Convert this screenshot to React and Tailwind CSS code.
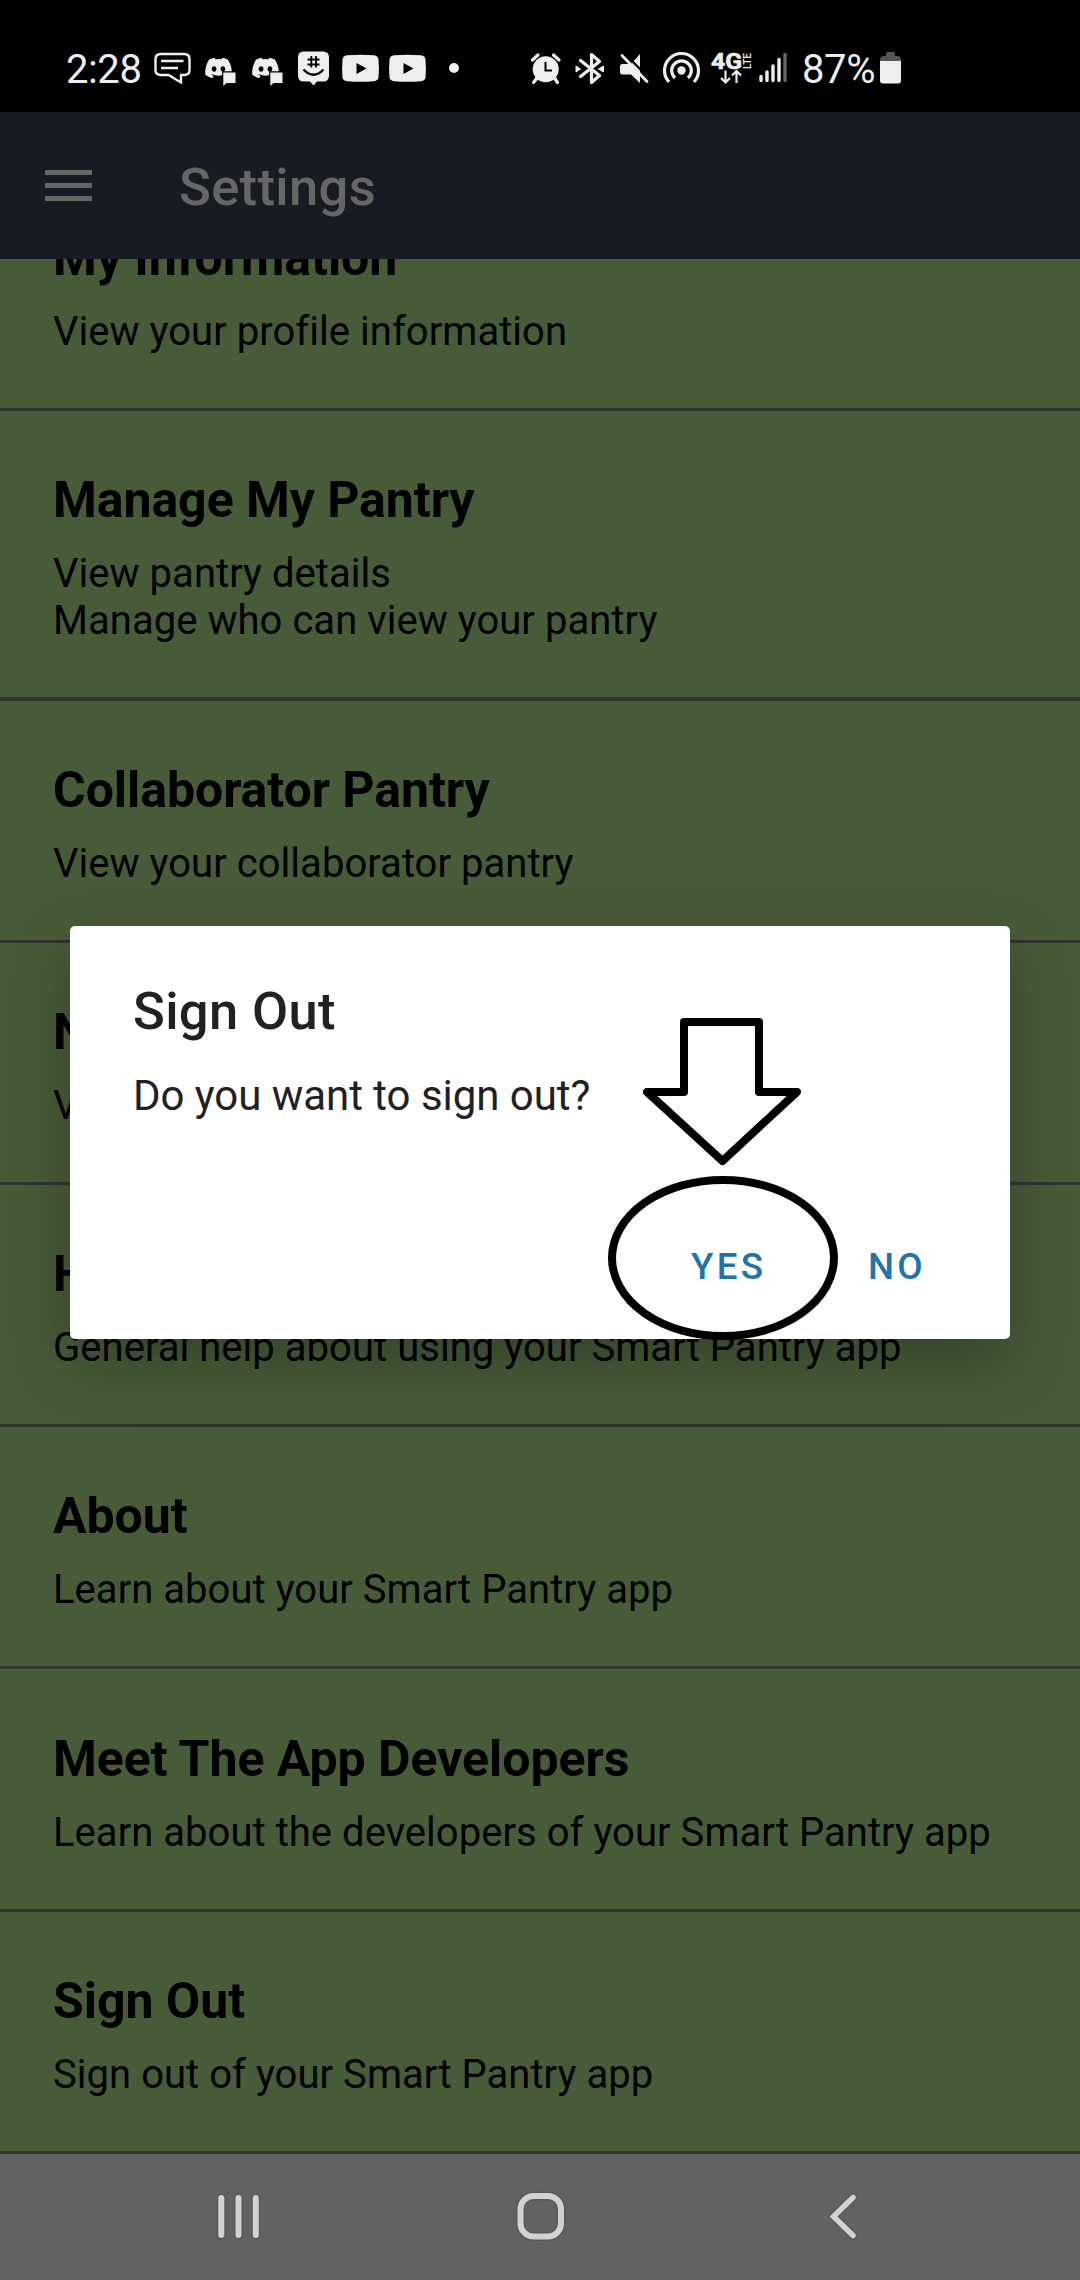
import React from "react";
import { FaDiscord } from "react-icons/fa";

const rows = [
  { title: "My Information", lines: ["View your profile information"], frame: "pt-[60px] border-b-[3px]" },
  { title: "Manage My Pantry", lines: ["View pantry details", "Manage who can view your pantry"], frame: "pt-[60px] border-b-[4px]" },
  { title: "Collaborator Pantry", lines: ["View your collaborator pantry"], frame: "pt-[60px] border-b-[3px]" },
  { title: "Notifications", lines: ["View your notifications"], frame: "pt-[60px] border-b-[3px]" },
  { title: "Help", lines: ["General help about using your Smart Pantry app"], frame: "pt-[60px] border-b-[3px]" },
  { title: "About", lines: ["Learn about your Smart Pantry app"], frame: "pt-[60px] border-b-[3px]" },
  { title: "Meet The App Developers", lines: ["Learn about the developers of your Smart Pantry app"], frame: "pt-[61px] border-b-[3px]" },
  { title: "Sign Out", lines: ["Sign out of your Smart Pantry app"], frame: "pt-[60px] border-b-[3px]" },
];

function Glyph({ box, className = "", children }) {
  const [, , w, h] = box.split(" ");
  return (
    <svg viewBox={box} width={w} height={h} className={"shrink-0 overflow-visible " + className} fill="none" stroke="none">
      {children}
    </svg>
  );
}

function Discord({ className }) {
  return (
    <div className={"relative h-[34px] w-[32px] shrink-0 " + className}>
      <FaDiscord className="mt-[2px] h-[30px] w-[29px]" />
      <svg viewBox="0 0 32 34" className="absolute top-0 left-0 h-[34px] w-[32px] overflow-visible">
        <path d="M19.300 21.500H31.500V32H22.500L19.300 35Z" fill="#eee" stroke="#000" strokeWidth="2.400" paintOrder="stroke" />
      </svg>
    </div>
  );
}

function YouTube({ className }) {
  return (
    <Glyph box="0 0 37 34" className={className}>
      <path d="M5 4.300Q18.500 3.100 32 4.300Q36 4.800 36.500 8.500Q37.300 17.500 36.500 26.500Q36 29.800 32 30.200Q18.500 31.400 5 30.200Q1 29.800.5 26.500Q-.3 17.500 .5 8.500Q1 4.800 5 4.300Z" fill="#eee" />
      <path d="M14.500 12L24.500 17.500L14.500 23Z" fill="#000" />
    </Glyph>
  );
}

function StatusBar() {
  return (
    <div className="flex h-[112px] items-start bg-black pt-[51px] text-[#eee]">
      <span className="-mt-[5px] ml-[66px] w-[76px] text-[40px] leading-[47px] tracking-[-0.4px] whitespace-nowrap">2:28</span>
      <Glyph box="154 51 37 34" className="ml-[12px]">
        <path d="M161 54H184Q189.500 54 189.500 59V70Q189.500 75 184 75H181V82.500L168.500 75H161Q155.500 75 155.500 70V59Q155.500 54 161 54Z" stroke="#eee" strokeWidth="2.400" />
        <path d="M161 61H183.500M161 68H178" stroke="#eee" strokeWidth="2.400" />
      </Glyph>
      <Discord className="ml-[13px]" />
      <Discord className="ml-[15px]" />
      <Glyph box="298 51 31 35" className="ml-[15px]">
        <path d="M304 51.500H323Q329 51.500 329 57.500V75.500Q329 81.500 323 81.500H317L313.500 85.500L310 81.500H304Q298 81.500 298 75.500V57.500Q298 51.500 304 51.500Z" fill="#eee" />
        <path d="M311.300 56V67.500M316 56V67.500M307.500 59.500H319.500M307.500 64.500H319.500" stroke="#000" strokeWidth="1.800" />
        <path d="M303.500 69.500Q313.500 80 323.500 69.500" stroke="#000" strokeWidth="2.400" />
      </Glyph>
      <YouTube className="ml-[13px]" />
      <YouTube className="ml-[10px]" />
      <span className="mt-[12px] ml-[23px] h-[10px] w-[10px] rounded-full bg-[#eee]" />
      <Glyph box="531 51 30 34" className="ml-[72px]">
        <circle cx="545.700" cy="69.300" r="13" fill="#eee" />
        <path d="M532.500 60L538 55M559 60L553.500 55M537 78L533.500 82.500M554.500 78L557.500 82.500" stroke="#eee" strokeWidth="3.200" strokeLinecap="round" />
        <path d="M545.500 62V70.500H552" stroke="#000" strokeWidth="2" />
      </Glyph>
      <Glyph box="575 51 30 34" className="ml-[14px]">
        <path d="M580.500 60.500L599.500 75.500L591.500 82.500V54.500L599.500 61.500L580.500 76.500" stroke="#eee" strokeWidth="3.200" strokeLinejoin="round" strokeLinecap="round" />
        <path d="M576 66L580.500 69L576 72ZM603.500 66L598.500 69L603.500 72Z" fill="#eee" stroke="#eee" strokeWidth="1" />
      </Glyph>
      <Glyph box="619 51 30 34" className="ml-[14px]">
        <path d="M622 64H631L640 54V83L631 74.500H622Q620 74.500 620 72V66.500Q620 64 622 64Z" fill="#eee" />
        <path d="M624.500 53.500L650 79" stroke="#000" strokeWidth="2.400" />
        <path d="M622 55.500L647 81.500" stroke="#eee" strokeWidth="2.800" strokeLinecap="round" />
      </Glyph>
      <Glyph box="663 51 38 34" className="ml-[14px]">
        <circle cx="681.500" cy="70.500" r="4.200" fill="#eee" />
        <path d="M675 78A9.800 9.800 0 1 1 688 78" stroke="#eee" strokeWidth="3.200" />
        <path d="M669 82A17 17 0 1 1 694 82" stroke="#eee" strokeWidth="3.200" />
      </Glyph>
      <Glyph box="711 51 41 34" className="ml-[10px]">
        <text x="711" y="68.500" textLength="31" lengthAdjust="spacingAndGlyphs" fill="#eee" stroke="#eee" strokeWidth=".6" fontSize="22" fontWeight="700" fontFamily="Roboto">4G</text>
        <text transform="translate(750.500 69) rotate(-90)" textLength="16" lengthAdjust="spacingAndGlyphs" fill="#eee" fontSize="10" fontWeight="500" fontFamily="Roboto">LTE</text>
        <path d="M725.500 70.500V82M721 78L725.500 82.500L730 78M736.500 83V71.500M732 75.500L736.500 71L741 75.500" stroke="#eee" strokeWidth="2.200" />
      </Glyph>
      <Glyph box="759 51 28 34" className="ml-[7px]">
        <path d="M761 76.500V80.500M767 72V80.500M773 66V80.500M779 59.500V80.500" stroke="#eee" strokeWidth="3.400" strokeLinecap="round" />
        <path d="M785 54.500V80.500" stroke="#666" strokeWidth="3.400" strokeLinecap="round" />
      </Glyph>
      <span className="-mt-[5px] ml-[15px] w-[73px] text-[40px] leading-[47px] tracking-[-0.4px] whitespace-nowrap">87%</span>
      <Glyph box="880 51 22 34" className="ml-[5px]">
        <path d="M880 62V60Q880 56 884 56H886V54Q886 52 888 52H893Q895 52 895 54V56H897Q901 56 901 60V62Z" fill="#555" />
        <path d="M880 61H901V80.500Q901 83.500 898 83.500H883Q880 83.500 880 80.500Z" fill="#eee" />
      </Glyph>
    </div>
  );
}

function SettingsRow({ title, lines, frame }) {
  return (
    <div className={"border-[#30352e] pr-4 pb-[53px] pl-[53px] " + frame}>
      <h2 className="text-[50px] leading-[58px] font-bold tracking-[-0.05px] whitespace-nowrap">{title}</h2>
      <div className="mt-[21px] text-[40px] leading-[47px] tracking-[0.04px] whitespace-nowrap">
        {lines.map((l) => (
          <p key={l}>{l}</p>
        ))}
      </div>
    </div>
  );
}

function Dialog() {
  return (
    <div className="absolute top-[926px] left-[70px] flex h-[413px] w-[940px] flex-col rounded-[5px] bg-white px-[63px] text-[#212121] shadow-[0_24px_60px_rgba(0,0,0,0.25)]">
      <h2 className="mt-[54px] text-[52.5px] leading-[62px] font-medium tracking-[0.35px]">Sign Out</h2>
      <p className="mt-[29px] text-[42px] leading-[49px] tracking-[-0.04px]">Do you want to sign out?</p>
      <div className="mt-[125px] flex text-[36.75px] leading-[43px] font-medium tracking-[3.280px] text-[#2372ab]">
        <button className="ml-[558px] w-[177px] text-left">YES</button>
        <button className="text-left">NO</button>
      </div>
      <svg viewBox="600 1010 250 334" className="absolute top-[84px] left-[530px] h-[334px] w-[250px]" fill="none" stroke="#000" strokeWidth="8" strokeLinejoin="round">
        <path d="M684 1022H759V1092H797L722.500 1161L647 1092H684Z" />
        <ellipse cx="723" cy="1258" rx="111" ry="78" />
      </svg>
    </div>
  );
}

function NavBar() {
  return (
    <div className="flex flex-1 items-start bg-[#626262] pt-[35px]">
      <Glyph box="214 2189 48 54" className="ml-[214px]">
        <path d="M221.300 2198V2235M238.500 2198V2235M255.800 2198V2235" stroke="#585858" strokeWidth="9" strokeLinecap="round" />
        <path d="M221.300 2198V2235M238.500 2198V2235M255.800 2198V2235" stroke="#d2d2d2" strokeWidth="6" strokeLinecap="round" />
      </Glyph>
      <Glyph box="514 2189 54 54" className="ml-[252px]">
        <rect x="520.500" y="2196" width="40.500" height="40.500" rx="13" stroke="#585858" strokeWidth="9" />
        <rect x="520.500" y="2196" width="40.500" height="40.500" rx="13" stroke="#d2d2d2" strokeWidth="6" />
      </Glyph>
      <Glyph box="826 2189 34 54" className="ml-[258px]">
        <path d="M853 2197.500L833.500 2216.500L853 2235.500" stroke="#585858" strokeWidth="8" strokeLinecap="round" />
        <path d="M853 2197.500L833.500 2216.500L853 2235.500" stroke="#d2d2d2" strokeWidth="5.500" strokeLinecap="round" />
      </Glyph>
    </div>
  );
}

export default function App() {
  return (
    <div className="relative flex h-[2280px] w-[1080px] flex-col overflow-hidden bg-[#485b38] font-['Roboto',sans-serif] text-black">
      <StatusBar />
      <header className="flex h-[147px] items-center bg-[#191b24] text-[#666]">
        <div className="ml-[45px] flex w-[47px] flex-col gap-[8px]">
          <span className="h-[5px] bg-[#666]" />
          <span className="h-[5px] bg-[#666]" />
          <span className="h-[5px] bg-[#666]" />
        </div>
        <h1 className="mt-[3px] ml-[87px] text-[52.5px] leading-[62px] font-medium tracking-[0.35px]">Settings</h1>
      </header>
      <main className="h-[1895px] shrink-0 overflow-hidden">
        <div className="-mt-[90px]">
          {rows.map((r) => (
            <SettingsRow key={r.title} {...r} />
          ))}
        </div>
      </main>
      <NavBar />
      <Dialog />
    </div>
  );
}
